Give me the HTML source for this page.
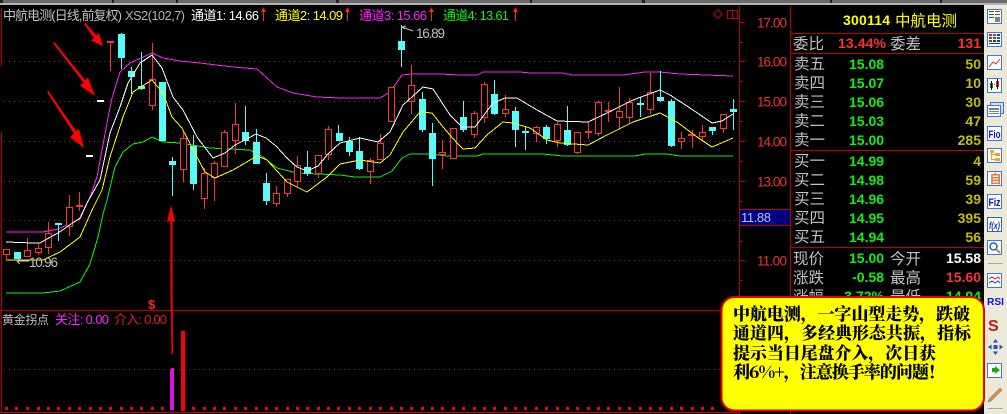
<!DOCTYPE html>
<html><head><meta charset="utf-8"><title>中航电测</title>
<style>
html,body{margin:0;padding:0;background:#000;width:1007px;height:414px;overflow:hidden}
svg{display:block}
text{font-family:"Liberation Sans","Noto Sans CJK SC",sans-serif}
.c{font-size:15.5px;fill:#c0c0c0}
.n{font-size:14px;font-weight:bold}
.g{fill:#10f010}.y{fill:#c0c000}.r{fill:#ff3232}.w{fill:#fff}
.a{font-size:13.5px;fill:#f03030}
.t{font-size:13px}
.b{font-family:"Noto Serif CJK SC","Liberation Serif",serif;font-size:17px;font-weight:900;fill:#000}
</style></head><body>
<svg width="1007" height="414" viewBox="0 0 1007 414" xmlns="http://www.w3.org/2000/svg">
<rect width="1007" height="414" fill="#000"/>
<rect width="1007" height="3" fill="#6a6a6a"/><rect y="3" width="1007" height="2" fill="#b4b4b4"/>
<path fill="#222" d="M0 0h3v3h-3zM112 0h2v3h-2zM176 0h2v3h-2zM336 0h3v3h-3zM530 0h2v3h-2zM642 0h3v3h-3zM830 0h2v3h-2zM940 0h2v3h-2z"/>
<rect x="984" y="5" width="23" height="409" fill="#ece9d8"/>

<!-- grid -->
<g stroke="#a02020" stroke-width="1" stroke-dasharray="1 4" fill="none" shape-rendering="crispEdges">
<path d="M4 61.5H735M4 101.5H735M4 141.5H735M4 181.5H735M4 220.5H735M4 260.5H739M4 369.5H739"/>
</g>

<!-- frame -->
<g stroke="#c00000" fill="none" shape-rendering="crispEdges">
<path d="M1.5 8V66M1.5 132V412"/>
<path d="M0 310.5H739M0 412.5H739"/>
<path d="M739.5 6V414M790.5 6V414"/>
<path d="M739 22.5H745M739 42.5H743M739 61.5H745M739 81.5H743M739 101.5H745M739 121.5H743M739 141.5H745M739 161.5H743M739 181.5H745M739 201.5H743M739 241.5H743M739 260.5H745M739 280.5H743M739 300.5H743"/>
<path d="M791 33.5H984M791 53.5H984M791 150.5H984M791 247.5H984"/>
<path d="M713.5 14L718 9.5L722.5 14L718 18.5Z"/>
<path d="M727.5 10.5H737.5V18.5H727.5ZM732.5 10.5V18.5"/>
</g>

<!-- lines -->
<g fill="none" stroke-width="1" shape-rendering="crispEdges">
<polyline stroke="#10f010" points="6,293 43,293 60,291 80,282 90,264 98,237 103,214 107,200 115,167 123,152 133,144 143,142 152,137 163,142 180,143 210,148 250,150 263,157 277,168 297,173 340,175 355,177 380,177 392,171 402,158 410,154 430,154 447,156 477,156 483,154 542,154 553,155 563,156 635,156 645,154 667,154 680,156 733,156"/>
<polyline stroke="#ff20ff" points="6,232 43,232 58,229 80,219 85,208 90,197 97,177 107,123 112,98 120,72 130,63 152,53 163,58 180,61 200,63 233,67 257,69 277,87 293,93 317,97 340,98 380,98 390,92 402,75 412,74 440,74 460,75 477,75 483,72 520,72 530,73 562,73 573,75 623,75 645,72 660,72 680,74 733,76"/>
</g>

<!-- wicks red -->
<path shape-rendering="crispEdges" stroke="#ff3232" fill="none" d="M6.5 249V259M27.5 238V257M38.5 244V255M48.5 222V254M69.5 195V236M79.5 192V211M110.5 42V71M152.5 43V110M183.5 130V182M204.5 168V209M214.5 161V201M224.500 130V167M235.5 103V154M276.5 186V207M287.5 179V197M297.5 156V187M318.5 155V178M328.5 126V160M370.5 158V184M380.5 134V160M391.5 87V122M411.5 65V114M442.5 140V169M453.5 128V159M474.5 111V138M484.5 82V123M505.5 95V117M536.5 126V142M557.5 122V147M577.5 132V154M588.5 122V139M598.5 101V136M608.5 102V122M619.5 87V130M629.5 98V123M650.5 73V114M681.5 132V149M692.5 130V148M702.5 125V140M723.5 114V133"/>
<!-- wicks cyan -->
<path shape-rendering="crispEdges" stroke="#54fcfc" fill="none" d="M58.5 223V241M121.5 33V69M131.5 67V94M141.5 52V90M172.5 157V196M193.5 135V190M245.5 106V145M256.5 129V164M266.5 173V205M307.5 151V176M338.5 125V141M349.5 137V156M359.5 137V170M401.5 25V67M422.5 92V132M432.5 123V186M463.5 101V132M494.5 80V115M515.5 107V147M525.5 126V150M546.5 125V144M567.5 106V146M640.5 97V117M660.5 71V102M671.5 99V147M712.5 127V135M733.5 99V130"/>
<!-- cyan bodies -->
<g fill="#54fcfc" shape-rendering="crispEdges">
<rect x="14" y="252" width="7" height="7"/><rect x="55" y="223" width="7" height="2"/>
<rect x="118" y="34" width="7" height="24"/><rect x="128" y="71" width="7" height="6"/><rect x="138" y="86" width="7" height="3"/>
<rect x="159" y="82" width="7" height="59"/><rect x="169" y="161" width="7" height="4"/><rect x="190" y="146" width="7" height="38"/>
<rect x="242" y="132" width="7" height="9"/><rect x="253" y="142" width="7" height="22"/><rect x="263" y="183" width="7" height="18"/>
<rect x="304" y="167" width="7" height="7"/><rect x="336" y="133" width="7" height="8"/><rect x="346" y="141" width="7" height="11"/>
<rect x="356" y="151" width="7" height="18"/><rect x="398" y="41" width="7" height="9"/><rect x="419" y="99" width="7" height="31"/>
<rect x="429" y="133" width="7" height="26"/><rect x="460" y="117" width="7" height="13"/><rect x="491" y="94" width="7" height="20"/>
<rect x="512" y="111" width="7" height="19"/><rect x="522" y="131" width="7" height="2"/><rect x="543" y="127" width="7" height="12"/>
<rect x="564" y="130" width="7" height="15"/><rect x="637" y="103" width="7" height="2"/><rect x="657" y="97" width="7" height="4"/>
<rect x="668" y="101" width="7" height="45"/><rect x="709" y="127" width="7" height="4"/><rect x="730" y="109" width="7" height="3"/>
</g>
<!-- red bodies -->
<g fill="#000" stroke="#ff3232" shape-rendering="crispEdges">
<rect x="3.5" y="249.5" width="6" height="5"/><rect x="24.5" y="250.5" width="6" height="6"/><rect x="35.5" y="248.5" width="6" height="4"/>
<rect x="45.5" y="233.5" width="6" height="14"/><rect x="66.5" y="207.5" width="6" height="19"/><rect x="76.5" y="205.5" width="6" height="1"/>
<rect x="107.5" y="41.5" width="6" height="1"/><rect x="149.5" y="79.5" width="6" height="26"/><rect x="180.5" y="138.5" width="6" height="31"/>
<rect x="201.5" y="173.5" width="6" height="25"/><rect x="211.5" y="163.5" width="6" height="14"/><rect x="221.5" y="132.5" width="6" height="34"/>
<rect x="232.5" y="124.5" width="6" height="16"/><rect x="273.5" y="193.5" width="6" height="10"/><rect x="284.5" y="179.5" width="6" height="14"/>
<rect x="294.5" y="165.5" width="6" height="16"/><rect x="315.5" y="155.5" width="6" height="18"/><rect x="325.5" y="129.5" width="6" height="25"/>
<rect x="367.5" y="160.5" width="6" height="11"/><rect x="377.5" y="143.5" width="6" height="16"/><rect x="388.5" y="87.5" width="6" height="34"/>
<rect x="408.5" y="85.5" width="6" height="16"/><rect x="439.5" y="152.5" width="6" height="2"/><rect x="450.5" y="128.5" width="6" height="30"/>
<rect x="471.5" y="113.5" width="6" height="21"/><rect x="481.5" y="84.5" width="6" height="33"/><rect x="502.5" y="109.5" width="6" height="4"/>
<rect x="533.5" y="127.5" width="6" height="6"/><rect x="554.5" y="124.5" width="6" height="16"/><rect x="574.5" y="132.5" width="6" height="20"/>
<rect x="585.5" y="131.5" width="6" height="1"/><rect x="595.5" y="102.5" width="6" height="31"/><rect x="605.5" y="110.5" width="6" height="1"/>
<rect x="616.5" y="111.5" width="6" height="6"/><rect x="626.5" y="102.5" width="6" height="15"/><rect x="647.5" y="92.5" width="6" height="17"/>
<rect x="678.5" y="138.5" width="6" height="3"/><rect x="688.5" y="134.5" width="6" height="1"/><rect x="699.5" y="132.5" width="6" height="4"/>
<rect x="720.5" y="114.5" width="6" height="14"/>
</g>

<g fill="none" stroke-width="1" shape-rendering="crispEdges">
<polyline stroke="#fff" points="6,242 33,243 40,243 45,240 58,233 80,218 87,203 100,180 110,133 120,107 128,83 140,63 152,55 162,68 173,97 183,110 197,137 213,158 225,153 235,145 245,140 256,134 266,138 276,146 287,158 297,167 307,171 318,166 328,154 340,143 360,138 378,142 390,132 403,105 423,87 433,89 450,115 462,127 475,127 493,103 505,98 517,98 537,110 557,121 588,122 607,113 633,100 660,90 670,95 690,108 712,123 722,121 733,114"/>
<polyline stroke="#ffff00" points="6,260 43,260 60,252 80,237 93,208 102,190 110,157 123,117 133,92 152,80 163,93 172,117 182,128 197,157 205,172 215,178 233,170 257,156 267,160 287,182 307,192 327,177 340,164 360,160 380,163 390,155 403,132 420,112 432,113 443,127 457,143 463,149 475,148 487,135 503,122 513,123 530,128 547,140 560,143 588,145 607,135 633,122 660,113 677,122 697,137 712,147 733,138"/>
</g>

<!-- white dashes -->
<rect x="97" y="100" width="7" height="2" fill="#fff"/><rect x="86" y="155" width="7" height="2" fill="#fff"/>

<!-- annotation arrows -->
<g fill="#ff0000">
<path d="M84 24L85.500 23L96.500 35.500L99 33L103 46L91 40.500L94 38Z"/>
<path d="M53 43L54.500 42L85 80L88 77.500L95 96L80 85.500L83.500 82.500Z"/>
<path d="M47 92L48.500 91L76 131L79 129L84 148L70 137L74 133.500Z"/>
<path d="M171 205L175 222L172.500 221L172.500 285L173 354L171.500 354L170.500 285L170.500 221L167 222Z"/>
</g>
<rect x="170" y="370" width="4" height="40" fill="#e010e0"/><rect x="171" y="368" width="3" height="3" fill="#e010e0"/>
<rect x="181" y="331" width="4" height="80" fill="#ff0000"/>
<text x="148" y="309" font-size="13" font-weight="bold" fill="#ff2020">$</text>

<!-- bottom squares -->
<path fill="#ff0000" d="M5 407h3v3h-3zM15 407h3v3h-3zM26 407h3v3h-3zM37 407h3v3h-3zM47 407h3v3h-3zM57 407h3v3h-3zM68 407h3v3h-3zM78 407h3v3h-3zM89 407h3v3h-3zM99 407h3v3h-3zM109 407h3v3h-3zM120 407h3v3h-3zM130 407h3v3h-3zM140 407h3v3h-3zM151 407h3v3h-3zM161 407h3v3h-3zM192 407h3v3h-3zM203 407h3v3h-3zM213 407h3v3h-3zM223 407h3v3h-3zM234 407h3v3h-3zM244 407h3v3h-3zM255 407h3v3h-3zM265 407h3v3h-3zM275 407h3v3h-3zM286 407h3v3h-3zM296 407h3v3h-3zM306 407h3v3h-3zM317 407h3v3h-3zM327 407h3v3h-3zM337 407h3v3h-3zM348 407h3v3h-3zM358 407h3v3h-3zM369 407h3v3h-3zM379 407h3v3h-3zM390 407h3v3h-3zM400 407h3v3h-3zM410 407h3v3h-3zM421 407h3v3h-3zM431 407h3v3h-3zM441 407h3v3h-3zM452 407h3v3h-3zM462 407h3v3h-3zM473 407h3v3h-3zM483 407h3v3h-3zM493 407h3v3h-3zM504 407h3v3h-3zM514 407h3v3h-3zM524 407h3v3h-3zM535 407h3v3h-3zM545 407h3v3h-3zM556 407h3v3h-3zM566 407h3v3h-3zM576 407h3v3h-3zM587 407h3v3h-3zM597 407h3v3h-3zM607 407h3v3h-3zM618 407h3v3h-3zM628 407h3v3h-3zM639 407h3v3h-3zM649 407h3v3h-3zM659 407h3v3h-3zM670 407h3v3h-3zM680 407h3v3h-3zM691 407h3v3h-3zM701 407h3v3h-3zM711 407h3v3h-3z"/>

<!-- labels in chart -->
<text x="3" y="20" class="t" fill="#c0c0c0" textLength="119" lengthAdjust="spacing">中航电测(日线,前复权)</text>
<text x="125" y="20" class="t" fill="#b0b0b0" textLength="60" lengthAdjust="spacing">XS2(102,7)</text>
<text x="191" y="20" class="t" fill="#fff" textLength="68" lengthAdjust="spacing">通道1: 14.66</text>
<text x="275" y="20" class="t" fill="#ffff00" textLength="68" lengthAdjust="spacing">通道2: 14.09</text>
<text x="359" y="20" class="t" fill="#ff20ff" textLength="68" lengthAdjust="spacing">通道3: 15.66</text>
<text x="443" y="20" class="t" fill="#10f010" textLength="66" lengthAdjust="spacing">通道4: 13.61</text>
<g fill="#ff2020">
<path d="M263.500 7L266 12H264V21H263V12H261Z"/><path d="M347.500 7L350 12H348V21H347V12H345Z"/><path d="M431.500 7L434 12H432V21H431V12H429Z"/><path d="M515.500 7L518 12H516V21H515V12H513Z"/>
</g>
<text x="416" y="38" font-size="13.500" fill="#c0c0c0" textLength="29" lengthAdjust="spacing">16.89</text>
<path d="M402 27L413 31" stroke="#c0c0c0" fill="none"/><path d="M406 26L402 27L405 29" stroke="#c0c0c0" fill="none"/>
<text x="29" y="267" font-size="13.500" fill="#c0c0c0" textLength="29" lengthAdjust="spacing">10.96</text>
<path d="M17 261H29M20 258L17 261L20 264" stroke="#c0c0c0" fill="none"/>
<text x="2" y="324" font-size="12" fill="#c0c0c0" textLength="47" lengthAdjust="spacing">黄金拐点</text>
<text x="55" y="324" font-size="13" fill="#ff20ff" textLength="54" lengthAdjust="spacing">关注: 0.00</text>
<text x="114" y="324" font-size="13" fill="#e02020" textLength="53" lengthAdjust="spacing">介入: 0.00</text>

<!-- axis labels -->
<g class="a">
<text x="757" y="27.500" class="a" textLength="30" lengthAdjust="spacing">17.00</text>
<text x="757" y="66.500" class="a" textLength="30" lengthAdjust="spacing">16.00</text>
<text x="757" y="106.500" class="a" textLength="30" lengthAdjust="spacing">15.00</text>
<text x="757" y="146.500" class="a" textLength="30" lengthAdjust="spacing">14.00</text>
<text x="757" y="186.500" class="a" textLength="30" lengthAdjust="spacing">13.00</text>
<text x="757" y="265.500" class="a" textLength="30" lengthAdjust="spacing">11.00</text>
</g>
<rect x="739.500" y="209.500" width="51" height="16" fill="#000080" stroke="#c00000" shape-rendering="crispEdges"/>
<text x="741" y="222" font-size="13" fill="#a8c8ff" textLength="30" lengthAdjust="spacing">11.88</text>

<!-- right panel -->
<text x="843" y="25" font-size="14" font-weight="bold" fill="#ffff00" textLength="47" lengthAdjust="spacing">300114</text>
<text x="895" y="26" font-size="15.500" fill="#ffff00">中航电测</text>
<text x="793" y="49" class="c">委比</text>
<text x="838" y="48" class="n r" textLength="48" lengthAdjust="spacing">13.44%</text>
<text x="890" y="49" class="c">委差</text>
<text x="981" y="48" class="n r" text-anchor="end">131</text>

<text x="794" y="69" class="c">卖五</text><text x="849" y="69" class="n g">15.08</text><text x="981" y="69" class="n y" text-anchor="end">50</text>
<text x="794" y="88" class="c">卖四</text><text x="849" y="88" class="n g">15.07</text><text x="981" y="88" class="n y" text-anchor="end">10</text>
<text x="794" y="107" class="c">卖三</text><text x="849" y="107" class="n g">15.06</text><text x="981" y="107" class="n y" text-anchor="end">30</text>
<text x="794" y="126" class="c">卖二</text><text x="849" y="126" class="n g">15.03</text><text x="981" y="126" class="n y" text-anchor="end">47</text>
<text x="794" y="145" class="c">卖一</text><text x="849" y="145" class="n g">15.00</text><text x="981" y="145" class="n y" text-anchor="end">285</text>

<text x="794" y="166" class="c">买一</text><text x="849" y="166" class="n g">14.99</text><text x="981" y="166" class="n y" text-anchor="end">4</text>
<text x="794" y="185" class="c">买二</text><text x="849" y="185" class="n g">14.98</text><text x="981" y="185" class="n y" text-anchor="end">59</text>
<text x="794" y="204" class="c">买三</text><text x="849" y="204" class="n g">14.96</text><text x="981" y="204" class="n y" text-anchor="end">39</text>
<text x="794" y="223" class="c">买四</text><text x="849" y="223" class="n g">14.95</text><text x="981" y="223" class="n y" text-anchor="end">395</text>
<text x="794" y="242" class="c">买五</text><text x="849" y="242" class="n g">14.94</text><text x="981" y="242" class="n y" text-anchor="end">56</text>

<text x="793" y="264" class="c">现价</text><text x="849" y="263" class="n g">15.00</text><text x="890" y="264" class="c">今开</text><text x="981" y="263" class="n w" text-anchor="end">15.58</text>
<text x="793" y="283" class="c">涨跌</text><text x="884" y="282" class="n g" text-anchor="end">-0.58</text><text x="890" y="283" class="c">最高</text><text x="981" y="282" class="n r" text-anchor="end">15.60</text>
<text x="793" y="302" class="c">涨幅</text><text x="884" y="301" class="n g" text-anchor="end">3.72%</text><text x="890" y="302" class="c">最低</text><text x="981" y="301" class="n g" text-anchor="end">14.94</text>

<!-- toolbar icons -->
<g shape-rendering="crispEdges">
<g fill="#fff" stroke="#3a78e0">
<rect x="987.500" y="9.500" width="14" height="14"/><rect x="987.500" y="32.500" width="14" height="14"/><rect x="987.500" y="55.500" width="14" height="14"/><rect x="987.500" y="78.500" width="14" height="14"/>
<rect x="990.500" y="102.500" width="13" height="11" fill="#cfe0f8"/><rect x="987.500" y="105.500" width="13" height="11"/>
<rect x="987.500" y="126.500" width="14" height="14"/><rect x="987.500" y="148.500" width="14" height="14"/><rect x="987.500" y="171.500" width="14" height="14"/><rect x="987.500" y="194.500" width="14" height="14"/>
<rect x="987.500" y="217.500" width="14" height="14" stroke="#207878"/><rect x="987.500" y="240.500" width="14" height="14"/><rect x="987.500" y="273.500" width="14" height="14"/>
<rect x="987.500" y="363.500" width="14" height="14"/>
</g>
<path fill="#108010" d="M989 11h5v1h-5zM989 14h5v1h-5zM989 17h5v1h-5z"/><path fill="#e02020" d="M995 11h5v1h-5zM995 14h5v1h-5z"/><path fill="#808080" d="M995 17h5v5h-5z"/>
<path fill="#e02020" d="M989 34h3v2h-3zM993 34h3v2h-3zM989 37h3v2h-3z"/><path fill="#108010" d="M993 37h3v2h-3zM997 37h3v2h-3zM989 40h3v2h-3z"/><path fill="#2030d0" d="M997 34h3v2h-3zM993 40h3v2h-3zM997 40h3v2h-3zM989 43h11v1h-11z"/>
<path fill="#7080a0" d="M989 108h10v2h-10zM989 111h10v1h-10zM989 113h10v1h-10z"/>
<path fill="#108010" d="M990 83h3v5h-3z"/><path fill="#e02020" d="M996 81h3v6h-3zM994 84h1v1h-1z"/><path fill="#101010" d="M991 81h1v9h-1zM997 79h1v10h-1z"/>
</g>
<path d="M989 67L993 62L996 64L1000 59" stroke="#e02020" fill="none"/>
<text x="988.500" y="138" font-size="11" font-weight="bold" fill="#1010d0" textLength="12" lengthAdjust="spacingAndGlyphs">Fio</text>
<path shape-rendering="crispEdges" fill="#f0a030" d="M990 150h4v3h-4zM995 153h5v3h-5zM995 158h5v3h-5zM991 153h1v7h-1zM992 154h3v1h-3zM992 159h3v1h-3z"/>
<rect x="988" y="172" width="13" height="13" fill="#fff"/><text x="989.500" y="183" font-size="12" font-weight="bold" fill="#f07030">自</text>
<text x="988.500" y="206" font-size="11" font-weight="bold" fill="#1010d0" textLength="12" lengthAdjust="spacingAndGlyphs">Fiz</text>
<text x="989" y="229" font-size="10" font-style="italic" font-weight="bold" fill="#1030c0" textLength="11" lengthAdjust="spacingAndGlyphs">f(x)</text>
<circle cx="993.500" cy="246.500" r="3.500" fill="#fff" stroke="#2060d0" stroke-width="1.500"/><path d="M996 249L1000 253" stroke="#c08040" stroke-width="2"/>
<path d="M988 263.500H1003" stroke="#aca899"/><path d="M988 408.500H1003" stroke="#aca899"/>
<path d="M989 279L992 277L995 279L998 277L1000 279" stroke="#e02020" fill="none"/><path d="M989 283L992 281L995 283L998 281L1000 283" stroke="#2040d0" fill="none"/>
<text x="987" y="305" font-size="10" font-weight="bold" fill="#1010d0" textLength="17" lengthAdjust="spacingAndGlyphs">RSI</text>
<text x="988" y="331" font-size="16" font-weight="bold" fill="#e01010" stroke="#808080" stroke-width=".3">S</text>
<path fill="#2050c0" d="M995.500 339L998 342.500H993ZM995.500 355L998 351.500H993ZM988 347L991.500 344.500V349.500ZM1003 347L999.500 344.500V349.500ZM993.500 345h4v4h-4z"/>
<path fill="#10b010" d="M992 368h3v-2l5 4l-5 4v-2h-3z"/>
<path d="M989 399L1000 388L1002 390L991 401L988 402Z" fill="#e09040" stroke="#908070" stroke-width=".6"/>

<!-- bubble -->
<rect x="721.500" y="297" width="262.500" height="113.500" rx="13" ry="13" fill="#ffff00" stroke="#e00000" stroke-width="2"/>
<text x="733" y="320" class="b" textLength="237" lengthAdjust="spacing">中航电测，一字山型走势，跌破</text>
<text x="733" y="339" class="b" textLength="238" lengthAdjust="spacing">通道四，多经典形态共振，指标</text>
<text x="733" y="359" class="b" textLength="203" lengthAdjust="spacing">提示当日尾盘介入，次日获</text>
<text x="733" y="378" class="b" textLength="212" lengthAdjust="spacing">利6%+，注意换手率的问题！</text>
</svg>
</body></html>
